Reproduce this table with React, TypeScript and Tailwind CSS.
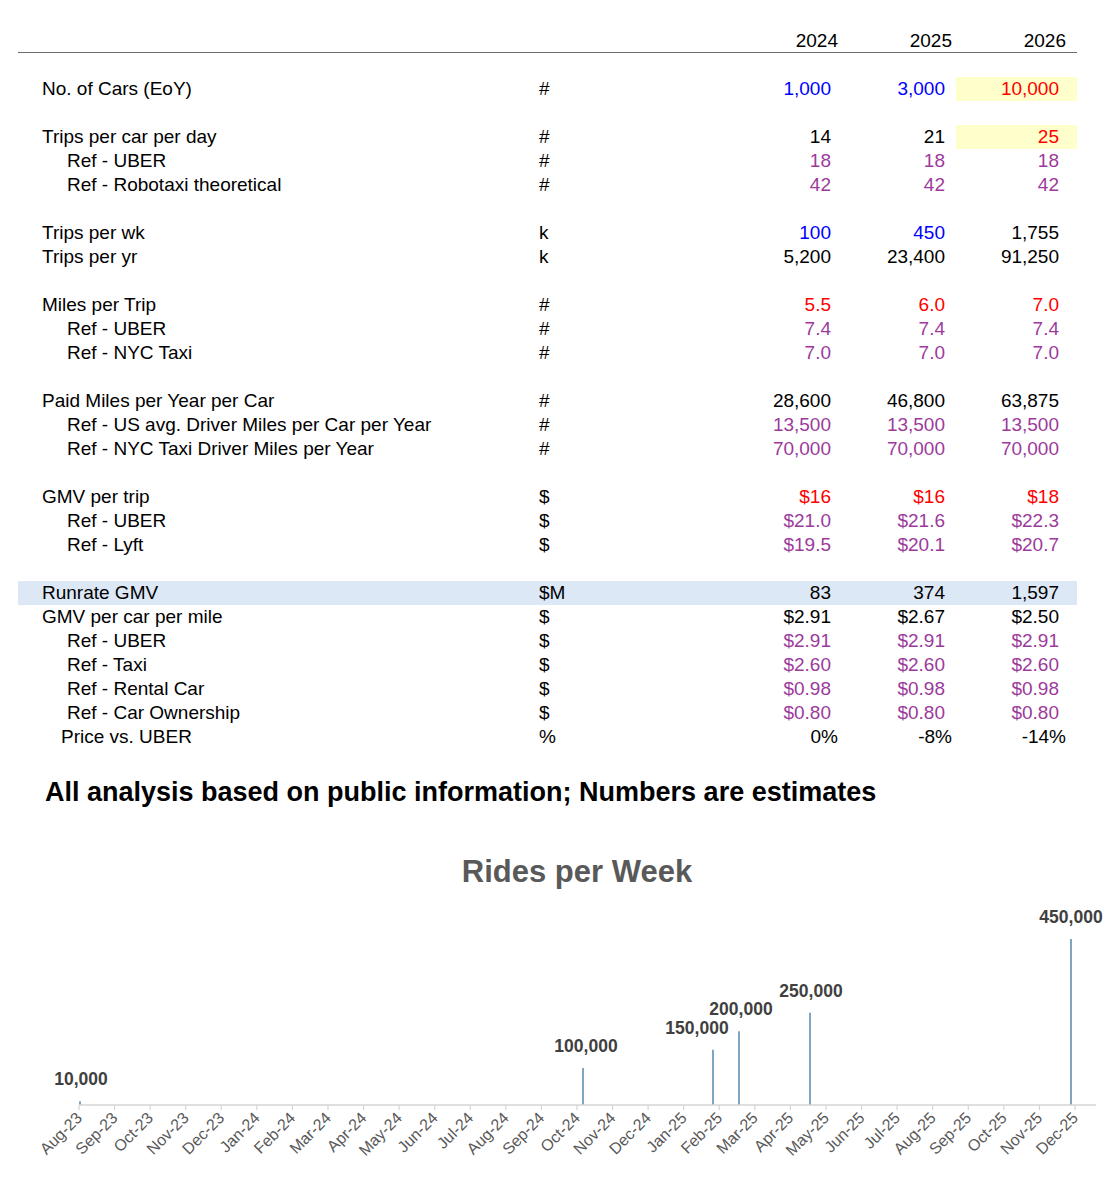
import React from "react";

type Tone = "k" | "b" | "r" | "p";

type Row =
  | { blank: true }
  | {
      blank?: false;
      label: string;
      indent?: 0 | 1 | 2;
      unit: string;
      values: string[];
      tones: Tone[];
      pct?: boolean;
      band?: boolean;
      yellow?: boolean;
    };

const TONE: Record<Tone, string> = {
  k: "text-black",
  b: "text-[#0000ff]",
  r: "text-[#ff0000]",
  p: "text-[#9c3a9c]",
};

const k3: Tone[] = ["k", "k", "k"];
const p3: Tone[] = ["p", "p", "p"];
const r3: Tone[] = ["r", "r", "r"];

const ROWS: Row[] = [
  { blank: true },
  { label: "No. of Cars (EoY)", unit: "#", values: ["1,000", "3,000", "10,000"], tones: ["b", "b", "r"], yellow: true },
  { blank: true },
  { label: "Trips per car per day", unit: "#", values: ["14", "21", "25"], tones: ["k", "k", "r"], yellow: true },
  { label: "Ref - UBER", indent: 1, unit: "#", values: ["18", "18", "18"], tones: p3 },
  { label: "Ref - Robotaxi theoretical", indent: 1, unit: "#", values: ["42", "42", "42"], tones: p3 },
  { blank: true },
  { label: "Trips per wk", unit: "k", values: ["100", "450", "1,755"], tones: ["b", "b", "k"] },
  { label: "Trips per yr", unit: "k", values: ["5,200", "23,400", "91,250"], tones: k3 },
  { blank: true },
  { label: "Miles per Trip", unit: "#", values: ["5.5", "6.0", "7.0"], tones: r3 },
  { label: "Ref - UBER", indent: 1, unit: "#", values: ["7.4", "7.4", "7.4"], tones: p3 },
  { label: "Ref - NYC Taxi", indent: 1, unit: "#", values: ["7.0", "7.0", "7.0"], tones: p3 },
  { blank: true },
  { label: "Paid Miles per Year per Car", unit: "#", values: ["28,600", "46,800", "63,875"], tones: k3 },
  { label: "Ref - US avg. Driver Miles per Car per Year", indent: 1, unit: "#", values: ["13,500", "13,500", "13,500"], tones: p3 },
  { label: "Ref - NYC Taxi Driver Miles per Year", indent: 1, unit: "#", values: ["70,000", "70,000", "70,000"], tones: p3 },
  { blank: true },
  { label: "GMV per trip", unit: "$", values: ["$16", "$16", "$18"], tones: r3 },
  { label: "Ref - UBER", indent: 1, unit: "$", values: ["$21.0", "$21.6", "$22.3"], tones: p3 },
  { label: "Ref - Lyft", indent: 1, unit: "$", values: ["$19.5", "$20.1", "$20.7"], tones: p3 },
  { blank: true },
  { label: "Runrate GMV", unit: "$M", values: ["83", "374", "1,597"], tones: k3, band: true },
  { label: "GMV per car per mile", unit: "$", values: ["$2.91", "$2.67", "$2.50"], tones: k3 },
  { label: "Ref - UBER", indent: 1, unit: "$", values: ["$2.91", "$2.91", "$2.91"], tones: p3 },
  { label: "Ref - Taxi", indent: 1, unit: "$", values: ["$2.60", "$2.60", "$2.60"], tones: p3 },
  { label: "Ref - Rental Car", indent: 1, unit: "$", values: ["$0.98", "$0.98", "$0.98"], tones: p3 },
  { label: "Ref - Car Ownership", indent: 1, unit: "$", values: ["$0.80", "$0.80", "$0.80"], tones: p3 },
  { label: "Price vs. UBER", indent: 2, unit: "%", values: ["0%", "-8%", "-14%"], tones: k3, pct: true },
];

// value columns: widths differ a little, like the sheet they came from
const COL_W = ["w-[114px] pr-[4px]", "w-[114px] pr-[4px]", "w-[121px] pr-[11px]"];
const INDENT = ["pl-[24px]", "pl-[49px]", "pl-[43px]"];

function TableRow({ row }: { row: Row }) {
  if (row.blank) return <div className="h-[24px]" />;
  return (
    <div className={`flex h-[24px] items-center ${row.band ? "bg-[#dce8f6]" : ""}`}>
      <div className={`w-[521px] ${INDENT[row.indent ?? 0]}`}>{row.label}</div>
      <div className="w-[189px]">{row.unit}</div>
      {row.values.map((v, i) => (
        <div
          key={i}
          className={`flex h-full items-center justify-end ${COL_W[i]} ${TONE[row.tones[i]]} ${
            row.yellow && i === 2 ? "bg-[#ffffcc]" : ""
          }`}
        >
          <span className={row.pct ? "" : "pr-[7px]"}>{v}</span>
        </div>
      ))}
    </div>
  );
}

const MONTHS = [
  "Aug-23", "Sep-23", "Oct-23", "Nov-23", "Dec-23",
  "Jan-24", "Feb-24", "Mar-24", "Apr-24", "May-24", "Jun-24", "Jul-24", "Aug-24", "Sep-24", "Oct-24", "Nov-24", "Dec-24",
  "Jan-25", "Feb-25", "Mar-25", "Apr-25", "May-25", "Jun-25", "Jul-25", "Aug-25", "Sep-25", "Oct-25", "Nov-25", "Dec-25",
];

const AXIS_Y = 215;
const X0 = 79;
const STEP = 35.57;
const SCALE = 166 / 450000;

const BARS = [
  { x: 80, v: 10000, lx: 81 },
  { x: 583, v: 100000, lx: 586 },
  { x: 713, v: 150000, lx: 697 },
  { x: 739, v: 200000, lx: 741 },
  { x: 810, v: 250000, lx: 811 },
  { x: 1071, v: 450000, lx: 1071 },
];

function RidesChart() {
  return (
    <svg width={1117} height={310} className="block">
      {BARS.map((b) => {
        const top = AXIS_Y - b.v * SCALE;
        return (
          <g key={b.v}>
            <line x1={b.x} x2={b.x} y1={AXIS_Y} y2={top} stroke="#7ea6c3" strokeWidth={2} />
            <text
              x={b.lx}
              y={top - 22}
              dominantBaseline="central"
              textAnchor="middle"
              fontSize={17.5}
              fontWeight={700}
              fill="#404040"
              fontFamily="'Liberation Sans', Arial, sans-serif"
            >
              {b.v.toLocaleString("en-US")}
            </text>
          </g>
        );
      })}
      <line x1={X0} x2={1096} y1={AXIS_Y} y2={AXIS_Y} stroke="#d4d4d4" strokeWidth={1.5} />
      {MONTHS.map((m, i) => {
        const x = X0 + i * STEP;
        return (
          <g key={m}>
            <line x1={x} x2={x} y1={AXIS_Y} y2={AXIS_Y + 5} stroke="#d4d4d4" strokeWidth={1.2} />
            <text
              x={x + 4}
              y={AXIS_Y + 14}
              textAnchor="end"
              transform={`rotate(-45 ${x + 4} ${AXIS_Y + 14})`}
              fontSize={16}
              fill="#595959"
              fontFamily="'Liberation Sans', Arial, sans-serif"
            >
              {m}
            </text>
          </g>
        );
      })}
    </svg>
  );
}

export default function App() {
  return (
    <div className="h-[1200px] w-[1117px] overflow-hidden bg-white font-['Liberation_Sans',Arial,sans-serif] text-[19px] leading-[24px] text-black">
      <div className="ml-[18px] w-[1059px] pt-[29px]">
        <div className="flex h-[24px] items-center border-b border-[#6b6b6b]">
          <div className="w-[521px]" />
          <div className="w-[189px]" />
          {["2024", "2025", "2026"].map((y, i) => (
            <div key={y} className={`text-right ${COL_W[i]}`}>
              {y}
            </div>
          ))}
        </div>
        {ROWS.map((r, i) => (
          <TableRow key={i} row={r} />
        ))}
      </div>

      <p className="mt-[28px] pl-[45px] text-[27px] font-bold leading-[30px]">
        All analysis based on public information; Numbers are estimates
      </p>

      <div className="mt-[47px] flex w-[1117px] justify-center pl-[37px] text-[31px] font-bold leading-[36px] text-[#595959]">
        Rides per Week
      </div>
      <RidesChart />
    </div>
  );
}
